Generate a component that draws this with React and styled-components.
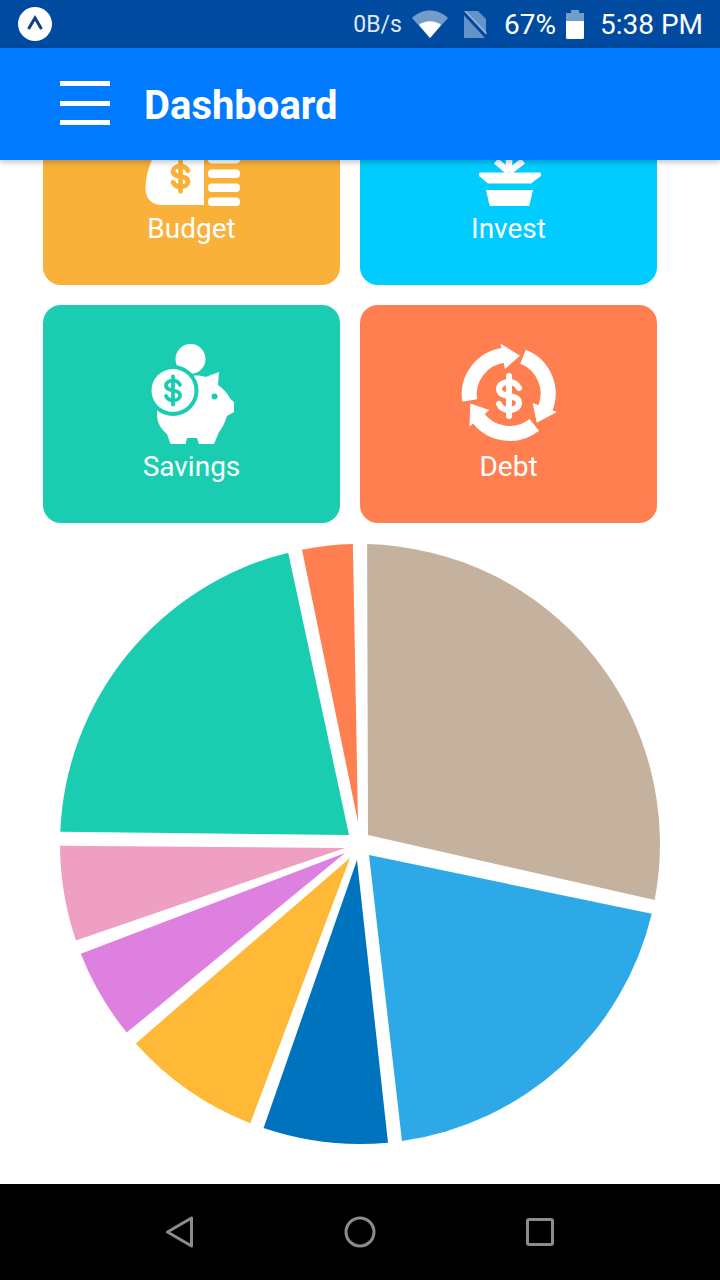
import React from "react";
import styled, { createGlobalStyle } from "styled-components";

// tip = where the wedge stops near the middle, measured off the chart
const slices = [
  { color: "#C5B29E", from: 0, to: 102.1, tip: [368, 291] },
  { color: "#2CA9E6", from: 102.1, to: 173.3, tip: [369, 311] },
  { color: "#0073BF", from: 173.3, to: 200.1, tip: [357, 316] },
  { color: "#FFB937", from: 200.1, to: 229.7, tip: [350, 314] },
  { color: "#DD80E0", from: 229.7, to: 249.9, tip: [345, 309] },
  { color: "#EFA0C2", from: 249.9, to: 271, tip: [345, 304] },
  { color: "#1ACDB1", from: 271, to: 347.5, tip: [349, 291] },
  { color: "#FF7F50", from: 347.5, to: 360, tip: [358, 278] },
];

const PAD = 1.35;

const point = (deg) => {
  const a = (deg * Math.PI) / 180;
  return `${(360 + 300 * Math.sin(a)).toFixed(1)} ${(300 - 300 * Math.cos(a)).toFixed(1)}`;
};

const slicePath = ({ from, to, tip }) => {
  const large = to - from > 180 ? 1 : 0;
  return `M${tip[0]} ${tip[1]} L${point(from + PAD)} A300 300 0 ${large} 1 ${point(to - PAD)} Z`;
};

const Dollar = ({ x, y, scale, color, width = 5 }) => (
  <g
    transform={`translate(${x} ${y}) scale(${scale})`}
    fill="none"
    stroke={color}
    strokeWidth={width / scale}
    strokeLinecap="round"
  >
    <path d="M10 -8 C8 -12 4 -14 0 -14 C-6 -14 -10 -11 -10 -7 C-10 -2 -5 -1 0 0 C5 1 10 2 10 7 C10 11 6 14 0 14 C-4 14 -8 12 -10 8" />
    <path d="M0 -20 V20" />
  </g>
);

const BudgetIcon = () => (
  <CardIcon viewBox="0 0 100 100">
    <path
      d="M14 46 C7 58 3.5 71 3.5 82 C3.5 93 10 99 20 99 L62 99 L62 46 Z"
      fill="#fff"
    />
    <Dollar x={38.5} y={70.5} scale={0.74} color="#F9B13A" width={4.8} />
    <rect x="66" y="49" width="32" height="8.5" rx="4" fill="#fff" />
    <rect x="66" y="63.5" width="32" height="8.5" rx="4" fill="#fff" />
    <rect x="66" y="77.5" width="32" height="8.5" rx="4" fill="#fff" />
    <rect x="66" y="91.5" width="32" height="8.5" rx="4" fill="#fff" />
  </CardIcon>
);

const InvestIcon = () => (
  <CardIcon viewBox="0 0 100 100">
    <path
      d="M50 66 L37 55 M50 66 V50 M50 66 L64 55"
      stroke="#fff"
      strokeWidth="6.5"
      fill="none"
    />
    <path
      d="M21 66.5 H81 Q82.5 67 82 70 L72 77.5 H29 L20 70 Q19.5 67 21 66.5 Z"
      fill="#fff"
    />
    <path d="M27 84 H74 L70.5 99 Q70 101 68 101 H33 Q31 101 30.5 99 Z" fill="#fff" />
  </CardIcon>
);

const SavingsIcon = () => (
  <CardIcon viewBox="0 0 100 100">
    <circle cx="48.5" cy="15" r="15" fill="#fff" />
    <path
      d="M15 70 C15 55 25 40 45 33 C52 31 58 31 63.5 33 L77 28 L76 41 C82 45 86 50 88.5 55 L92 58 V68 L85 72 C83 78 81 83 77 88 L72 100 H57 L55 94 H45 L43.5 100 H28.5 L25 90 C18 84 15 78 15 70 Z"
      fill="#fff"
    />
    <circle cx="72.5" cy="52.5" r="3" fill="#1ACDB1" />
    <circle cx="31" cy="46.5" r="25.5" fill="#1ACDB1" />
    <circle cx="31" cy="46.5" r="21.5" fill="#fff" />
    <Dollar x={31} y={46.5} scale={0.7} color="#1ACDB1" width={3.8} />
  </CardIcon>
);

const DebtIcon = () => (
  <CardIcon viewBox="0 0 100 100">
    {[0, 120, 240].map((turn) => (
      <g key={turn} transform={`rotate(${turn} 50 50)`}>
        <path
          d="M10.7 56.5 A39.5 39.5 0 0 1 44.6 11.4"
          fill="none"
          stroke="#fff"
          strokeWidth="15"
        />
        <path d="M41.5 -0.5 L45.9 25 L61 11.7 Z" fill="#fff" />
      </g>
    ))}
    <Dollar x={50} y={52} scale={1} color="#fff" width={6} />
  </CardIcon>
);

const cards = [
  { label: "Budget", color: "#F9B13A", Icon: BudgetIcon },
  { label: "Invest", color: "#00CCFF", Icon: InvestIcon },
  { label: "Savings", color: "#1ACDB1", Icon: SavingsIcon },
  { label: "Debt", color: "#FF7F50", Icon: DebtIcon },
];

const App = () => {
  return (
    <Screen>
      <GlobalStyle />
      <StatusBar>
        <AppBadge viewBox="0 0 34 34">
          <circle cx="17" cy="17" r="17" fill="#fff" />
          <path
            d="M10.5 22 L17 11 L23.5 22"
            fill="none"
            stroke="#0C3F8C"
            strokeWidth="3"
          />
        </AppBadge>
        <StatusRight>
          <NetSpeed>0B/s</NetSpeed>
          <svg width="36" height="28" viewBox="0 0 36 28">
            <path d="M0 8 C10 -2 26 -2 36 8 L18 28 Z" fill="#fff" opacity="0.45" />
            <path d="M7 15 C13 10 23 10 29 15 L18 28 Z" fill="#fff" />
          </svg>
          <SimIcon width="24" height="27" viewBox="0 0 24 27">
            <path d="M1 0 H15 L23 8 V27 H1 Z" fill="#fff" opacity="0.4" />
            <path d="M0 1 L24 27" stroke="#004BA0" strokeWidth="3" />
            <path d="M2 0 L24 23" stroke="#fff" strokeWidth="1.5" opacity="0.35" />
          </SimIcon>
          <Battery>67%</Battery>
          <BatteryIcon width="18" height="29" viewBox="0 0 18 29">
            <path d="M5 0 H13 V3 H18 V29 H0 V3 H5 Z" fill="#fff" opacity="0.45" />
            <path d="M0 11 H18 V27 Q18 29 16 29 H2 Q0 29 0 27 Z" fill="#fff" />
          </BatteryIcon>
          <Clock>5:38 PM</Clock>
        </StatusRight>
      </StatusBar>

      <Header>
        <MenuButton>
          <MenuBar />
          <MenuBar />
          <MenuBar />
        </MenuButton>
        <Title>Dashboard</Title>
      </Header>

      <ScrollArea>
        {/* the list is scrolled a bit, first row slides under the header */}
        <ScrollContent>
          <CardGrid>
            {cards.map(({ label, color, Icon }) => (
              <Card key={label} $color={color}>
                <Icon />
                <CardLabel>{label}</CardLabel>
              </Card>
            ))}
          </CardGrid>
          <Pie viewBox="0 0 720 620">
            {slices.map((slice) => (
              <path key={slice.color} d={slicePath(slice)} fill={slice.color} />
            ))}
          </Pie>
        </ScrollContent>
      </ScrollArea>

      <NavBar>
        <NavSlot>
          <svg width="30" height="32" viewBox="0 0 30 32">
            <path
              d="M2.5 16 L26.5 2 V30 Z"
              fill="none"
              stroke="#8C8C8C"
              strokeWidth="3"
              strokeLinejoin="round"
            />
          </svg>
        </NavSlot>
        <NavSlot>
          <svg width="32" height="32" viewBox="0 0 32 32">
            <circle cx="16" cy="16" r="14" fill="none" stroke="#8C8C8C" strokeWidth="3" />
          </svg>
        </NavSlot>
        <NavSlot>
          <svg width="30" height="30" viewBox="0 0 30 30">
            <rect
              x="2.5"
              y="2.5"
              width="25"
              height="25"
              rx="1.5"
              fill="none"
              stroke="#8C8C8C"
              strokeWidth="3"
            />
          </svg>
        </NavSlot>
      </NavBar>
    </Screen>
  );
};

export default App;

const GlobalStyle = createGlobalStyle`
  html, body {
    margin: 0;
    padding: 0;
    background: #fff;
  }
  body {
    font-family: Roboto, "Liberation Sans", sans-serif;
  }
`;

const Screen = styled.div`
  display: flex;
  flex-direction: column;
  width: 720px;
  height: 1280px;
  overflow: hidden;
`;

const StatusBar = styled.div`
  display: flex;
  align-items: center;
  justify-content: space-between;
  flex: 0 0 48px;
  padding: 0 17px 0 18px;
  background: #004ba0;
  color: #fff;
`;
const AppBadge = styled.svg`
  width: 34px;
  height: 34px;
`;
const StatusRight = styled.div`
  display: flex;
  align-items: center;
`;
const NetSpeed = styled.span`
  font-size: 23px;
  color: #dfe8f3;
  margin-right: 10px;
`;
const SimIcon = styled.svg`
  margin-left: 15px;
`;
const Battery = styled.span`
  font-size: 28px;
  margin-left: 17px;
`;
const BatteryIcon = styled.svg`
  margin-left: 10px;
`;
const Clock = styled.span`
  font-size: 28px;
  margin-left: 16px;
`;

const Header = styled.header`
  position: relative;
  z-index: 2;
  display: flex;
  align-items: center;
  gap: 34px;
  flex: 0 0 112px;
  padding-left: 60px;
  background: #007aff;
  box-shadow: 0 2px 6px rgba(0, 0, 0, 0.25);
`;
const MenuButton = styled.div`
  display: flex;
  flex-direction: column;
  gap: 14.5px;
  width: 50px;
  margin-top: -2px;
`;
const MenuBar = styled.div`
  height: 5px;
  background: #fff;
`;
const Title = styled.h1`
  margin: 3px 0 0;
  font-size: 40px;
  font-weight: 700;
  color: #fff;
`;

const ScrollArea = styled.main`
  flex: 1;
  overflow: hidden;
  background: #fff;
`;
const ScrollContent = styled.div`
  margin-top: -93px;
`;
const CardGrid = styled.div`
  display: grid;
  grid-template-columns: 297px 297px;
  gap: 20px;
  margin-left: 43px;
`;
const Card = styled.div`
  display: flex;
  flex-direction: column;
  align-items: center;
  height: 218px;
  padding-top: 39px;
  box-sizing: border-box;
  border-radius: 18px;
  background: ${(p) => p.$color};
`;
const CardIcon = styled.svg`
  width: 100px;
  height: 100px;
  flex: none;
`;
const CardLabel = styled.div`
  margin-top: 7px;
  font-size: 28px;
  line-height: 32px;
  color: #fff;
`;
const Pie = styled.svg`
  display: block;
  width: 720px;
  height: 620px;
  margin-top: 21px;
`;

const NavBar = styled.nav`
  display: grid;
  grid-template-columns: repeat(3, 180px);
  flex: 0 0 96px;
  padding: 0 90px;
  background: #000;
`;
const NavSlot = styled.div`
  display: flex;
  align-items: center;
  justify-content: center;
`;
